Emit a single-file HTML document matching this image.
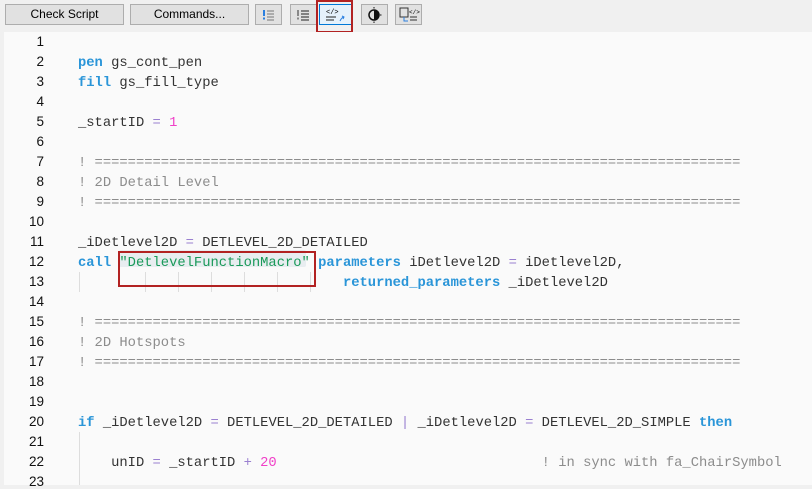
<!DOCTYPE html>
<html><head><style>
body{margin:0;width:812px;height:485px;overflow:hidden;background:#f0f0f0;font-family:"Liberation Sans",sans-serif;position:relative}
.tb{position:absolute;top:0;left:0;width:812px;height:32px;background:#f0f0f0}
.btn{position:absolute;top:4px;height:19px;border:1px solid #adadad;background:#e1e1e1;font-size:12px;line-height:19px;text-align:center;color:#000}
.ib{position:absolute;top:4px;width:25px;height:19px;border:1px solid #adadad;background:#e1e1e1}
.ed{position:absolute;left:4px;top:32px;width:808px;height:453px;background:#fafafa}
.ln{position:absolute;left:0;width:44px;text-align:right;font:13.5px "Liberation Sans",sans-serif;color:#111}
.code{position:absolute;left:74px;font:13.8px "Liberation Mono",monospace;color:#333;white-space:pre}
.k{color:#2a95d8;font-weight:bold}.c{color:#8c8c8c}.n{color:#f040c8}.o{color:#9a80d0}.s{color:#1a9a5a}
.g{position:absolute;width:1px;background:#ddd}
</style></head><body>
<div class="tb">
<div class="btn" style="left:5px;width:117px">Check Script</div>
<div class="btn" style="left:130px;width:117px">Commands...</div>
<div class="ib" style="left:255px"><svg width="25" height="19"><rect x="7" y="5" width="2" height="6" fill="#2a7fe0"/><rect x="7" y="12.5" width="2" height="2" fill="#2a7fe0"/><path d="M11 6h7M11 9h7M11 12h7M11 15h7" stroke="#777"/></svg></div>
<div class="ib" style="left:290px"><svg width="25" height="19"><rect x="6" y="5" width="2" height="6" fill="#888"/><rect x="6" y="12.5" width="2" height="2" fill="#888"/><path d="M10 6h8M10 9h8M10 12h8M10 15h8" stroke="#222"/></svg></div>
<div class="ib" style="left:319px;width:31px;background:#e5f1fb;border-color:#0078d7"><svg width="31" height="19"><text x="6" y="9" font-size="7" font-family="Liberation Mono">&lt;/&gt;</text><path d="M6 12h10M6 15h8" stroke="#222"/><path d="M20 16q2-4 4-4M22 11l2 1-1 2" stroke="#2a7fe0" fill="none"/></svg></div>
<div style="position:absolute;left:316px;top:0;width:33px;height:29px;border:2px solid #b22222"></div>
<div class="ib" style="left:361px"><svg width="25" height="19"><circle cx="12" cy="10" r="5" fill="none" stroke="#111" stroke-width="1.5"/><path d="M12 5a5 5 0 0 1 0 10z" fill="#111"/><path d="M12 2v1.5M12 16.5v1.5M18 10h1.5" stroke="#111"/></svg></div>
<div class="ib" style="left:395px"><svg width="25" height="19"><rect x="4" y="3" width="8" height="9" fill="none" stroke="#333"/><path d="M8 12v4h4" stroke="#2a7fe0" fill="none"/><text x="13" y="9" font-size="6" font-family="Liberation Mono">&lt;/&gt;</text><path d="M14 12h7M14 15h7" stroke="#333"/></svg></div>
</div>
<div class="ed">
<div style="position:absolute;left:115px;top:218px;width:187px;height:17px;background:#e8edf0;border-radius:2px"></div>
</div>
<div class="g" style="left:79px;top:432px;height:53px"></div>
<div class="g" style="left:79px;top:272px;height:20px"></div>
<div class="g" style="left:145px;top:272px;height:20px"></div>
<div class="g" style="left:178px;top:272px;height:20px"></div>
<div class="g" style="left:211px;top:272px;height:20px"></div>
<div class="g" style="left:244px;top:272px;height:20px"></div>
<div class="g" style="left:277px;top:272px;height:20px"></div>
<div class="g" style="left:310px;top:272px;height:20px"></div>
<div style="position:absolute;left:0;top:32px">
<div class="ln" style="top:2px">1</div><div class="ln" style="top:22px">2</div><div class="ln" style="top:42px">3</div><div class="ln" style="top:62px">4</div><div class="ln" style="top:82px">5</div><div class="ln" style="top:102px">6</div><div class="ln" style="top:122px">7</div><div class="ln" style="top:142px">8</div><div class="ln" style="top:162px">9</div><div class="ln" style="top:182px">10</div><div class="ln" style="top:202px">11</div><div class="ln" style="top:222px">12</div><div class="ln" style="top:242px">13</div><div class="ln" style="top:262px">14</div><div class="ln" style="top:282px">15</div><div class="ln" style="top:302px">16</div><div class="ln" style="top:322px">17</div><div class="ln" style="top:342px">18</div><div class="ln" style="top:362px">19</div><div class="ln" style="top:382px">20</div><div class="ln" style="top:402px">21</div><div class="ln" style="top:422px">22</div><div class="ln" style="top:442px">23</div>
</div>
<div class="code" style="left:78px;top:34px;line-height:20px"><br><span class="k">pen</span> gs_cont_pen
<span class="k">fill</span> gs_fill_type

_startID <span class="o">=</span> <span class="n">1</span>

<span class="c">! ==============================================================================</span>
<span class="c">! 2D Detail Level</span>
<span class="c">! ==============================================================================</span>

_iDetlevel2D <span class="o">=</span> DETLEVEL_2D_DETAILED
<span class="k">call</span> <span class="s">"DetlevelFunctionMacro"</span> <span class="k">parameters</span> iDetlevel2D <span class="o">=</span> iDetlevel2D,
                                <span class="k">returned_parameters</span> _iDetlevel2D

<span class="c">! ==============================================================================</span>
<span class="c">! 2D Hotspots</span>
<span class="c">! ==============================================================================</span>


<span class="k">if</span> _iDetlevel2D <span class="o">=</span> DETLEVEL_2D_DETAILED <span class="o">|</span> _iDetlevel2D <span class="o">=</span> DETLEVEL_2D_SIMPLE <span class="k">then</span>

    unID <span class="o">=</span> _startID <span class="o">+</span> <span class="n">20</span>                                <span class="c">! in sync with fa_ChairSymbol</span>
</div>
<div style="position:absolute;left:118px;top:251px;width:194px;height:32px;border:2px solid #b22222"></div>
</body></html>
